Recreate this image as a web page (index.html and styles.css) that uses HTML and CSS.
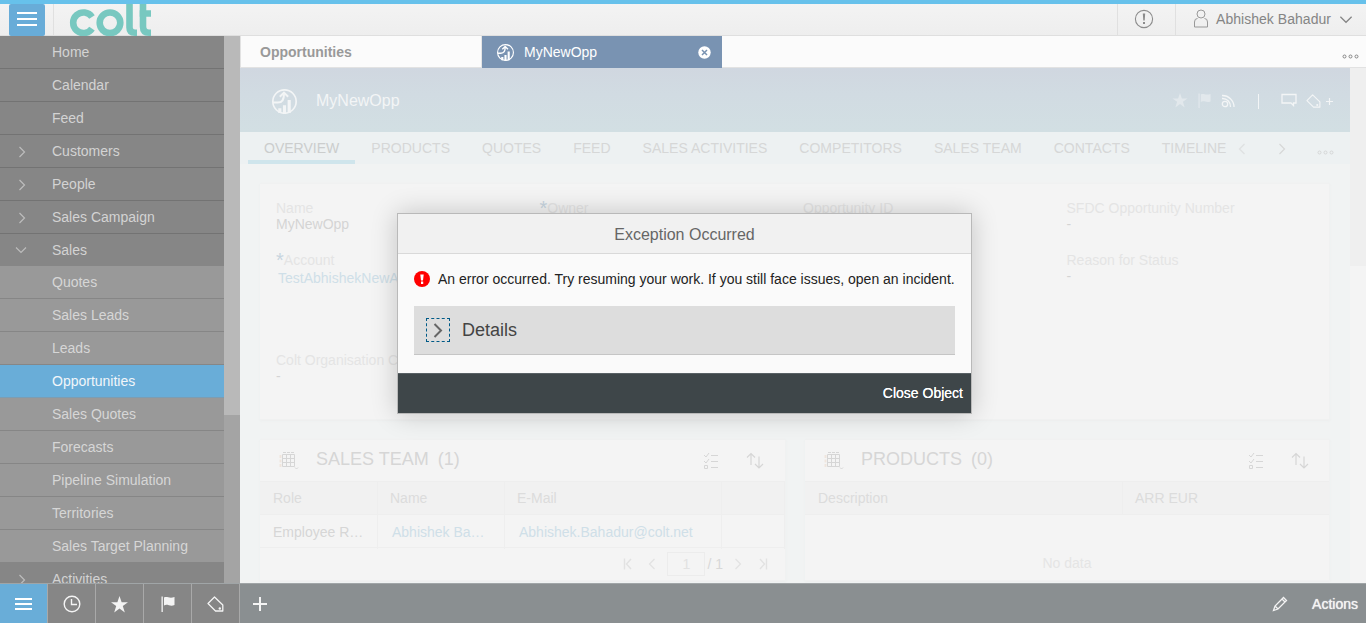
FILE: index.html
```html
<!DOCTYPE html>
<html lang="en">
<head>
<meta charset="utf-8">
<title>MyNewOpp</title>
<link rel="stylesheet" href="styles.css">
</head>
<body>
<svg class="defs" width="0" height="0">
  <symbol id="right" viewBox="0 0 8 12"><path d="M1.500 1l5 5-5 5" fill="none" stroke="currentColor" stroke-width="1.200"/></symbol>
  <symbol id="down" viewBox="0 0 12 8"><path d="M1 1.500l5 5 5-5" fill="none" stroke="currentColor" stroke-width="1.100"/></symbol>
  <symbol id="opp" viewBox="0 0 24 24"><circle cx="12" cy="12" r="11.200" fill="none" stroke="currentColor" stroke-width="1.600"/><path d="M1 13h4.500c4.500 0 6-3 6-8M7.500 7.500l4-4 4 4" fill="none" stroke="currentColor" stroke-width="1.900"/><path d="M6 18.500h3V23H6zM10.500 15.500h3V24h-3zM15 10.500h3V23h-3z" fill="currentColor"/></symbol>
  <symbol id="star" viewBox="0 0 16 16"><path d="M8 0l2 5.800h6l-4.900 3.600L13 15.500 8 11.800l-5 3.700 1.900-6.100L0 5.800h6z" fill="currentColor"/></symbol>
  <symbol id="flag" viewBox="0 0 14 16"><path d="M.5.500h1.300V16H.5zM3 1.500c3-1.800 5 1.500 10.500-.500v8C9 11 6.500 7.500 3 9.500z" fill="currentColor"/></symbol>
  <symbol id="tag" viewBox="0 0 17 16"><path d="M1 7.500L7.500 1 15.800 9v6H8.500z" fill="none" stroke="currentColor" stroke-width="1.300" stroke-linejoin="round"/><circle cx="12.800" cy="12.500" r="1.200" fill="currentColor"/></symbol>
  <symbol id="grid" viewBox="0 0 22 20"><path d="M4.500 3.500h12v12h-12zM8.500 3.500v12M12.500 3.500v12M4.500 7.500h12M4.500 11.500h12M5 1.500h3M9 1.500h3M13 1.500h3M17 16.500l1.500 1.500 1.500-1.500" fill="none" stroke="currentColor"/><path d="M2.500 4v12" stroke="#efe5dd" stroke-width="2" stroke-dasharray="3 1.500"/></symbol>
  <symbol id="list" viewBox="0 0 16 17"><path d="M8 3.500h7M8 9.500h7M8 15.500h7M1 3l2 2 3-4M1 9l2 2 3-4M1.500 13.500h3v3h-3z" fill="none" stroke="currentColor"/></symbol>
  <symbol id="sort" viewBox="0 0 18 17"><path d="M5 13V1.500M1 5.500l4-4 4 4M13 4.500V16M9 12l4 4 4-4" fill="none" stroke="currentColor" stroke-width="1.200"/></symbol>
  <symbol id="dots" viewBox="0 0 17 5"><g fill="none" stroke="currentColor"><circle cx="2.500" cy="2.500" r="1.500"/><circle cx="8.500" cy="2.500" r="1.500"/><circle cx="14.500" cy="2.500" r="1.500"/></g></symbol>
</svg>

<header class="top">
  <div class="menu-btn"><i></i><i></i><i></i></div>
  <div class="brand">
    <svg width="83" height="32" viewBox="0 0 83 32" role="img" aria-label="colt"><g fill="none" stroke="#78c8c0" stroke-width="6.600"><path d="M23 13a10.300 10.300 0 1 0 0 11.600"/><circle cx="41" cy="18.800" r="10.300"/><path d="M60.500 0v23.500q0 5.200 5.500 5.200h2M74 0v22.500q0 6.200 6 6.200h2M70.500 9.500H82"/></g></svg>
  </div>
  <div class="alert"><svg width="20" height="20" viewBox="0 0 20 20"><circle cx="10" cy="10" r="8.600" fill="none" stroke="#8c8c8c" stroke-width="1.100"/><path d="M8.800 4.500h2.400l-.5 7H9.300zM9 13h2v2H9z" fill="#8c8c8c"/></svg></div>
  <div class="user"><svg width="16" height="19" viewBox="0 0 16 19" fill="none" stroke="#999"><circle cx="8" cy="5" r="4"/><path d="M4.500 9.500Q1.500 9.500 1.500 13v5h13v-5q0-3.500-3-3.500"/></svg><span>Abhishek Bahadur</span><svg class="user-down" width="14" height="9"><use href="#down"/></svg></div>
</header>

<div class="middle">
  <nav class="side">
    <div class="row">Home</div>
    <div class="row">Calendar</div>
    <div class="row">Feed</div>
    <div class="row"><svg class="chev"><use href="#right"/></svg>Customers</div>
    <div class="row"><svg class="chev"><use href="#right"/></svg>People</div>
    <div class="row"><svg class="chev"><use href="#right"/></svg>Sales Campaign</div>
    <div class="row open"><svg class="chev-down"><use href="#down"/></svg>Sales</div>
    <div class="row sub">Quotes</div>
    <div class="row sub">Sales Leads</div>
    <div class="row sub">Leads</div>
    <div class="row sub active">Opportunities</div>
    <div class="row sub">Sales Quotes</div>
    <div class="row sub">Forecasts</div>
    <div class="row sub">Pipeline Simulation</div>
    <div class="row sub">Territories</div>
    <div class="row sub">Sales Target Planning</div>
    <div class="row"><svg class="chev"><use href="#right"/></svg>Activities</div>
  </nav>
  <div class="side-scroll"><div class="thumb"></div></div>

  <main class="work">
    <div class="doc-tabs">
      <div class="doc-tab">Opportunities</div>
      <div class="doc-tab current"><svg width="17" height="17"><use href="#opp"/></svg><span>MyNewOpp</span><svg class="close" width="13" height="13" viewBox="0 0 13 13"><circle cx="6.500" cy="6.500" r="6.200" fill="#fff"/><path d="M4 4l5 5M9 4l-5 5" stroke="#7993b2" stroke-width="1.500"/></svg></div>
      <svg class="more" width="17" height="5"><use href="#dots"/></svg>
    </div>
    <div class="pane">
      <div class="page">
        <div class="title-bar">
          <svg width="25" height="25"><use href="#opp"/></svg>
          <h1>MyNewOpp</h1>
          <div class="tools">
            <svg class="t-star" width="16" height="15"><use href="#star"/></svg>
            <svg class="t-flag" width="13" height="15"><use href="#flag"/></svg>
            <svg class="t-feed" width="14" height="14" viewBox="0 0 14 14" fill="none" stroke="currentColor" stroke-width="1.300"><circle cx="4" cy="10" r="2.700"/><path d="M1 4.500a8 8 0 0 1 8.500 8.500M1 1.500A11.500 11.500 0 0 1 13 13"/></svg>
            <i class="bar"></i>
            <svg class="t-chat" width="16" height="14" viewBox="0 0 16 14"><path d="M1 1.500h14V10h-2.500v2.500L10 10H1z" fill="none" stroke="currentColor" stroke-width="1.300"/></svg>
            <svg class="t-tag" width="15" height="14"><use href="#tag"/></svg>
            <svg class="t-plus" width="9" height="9" viewBox="0 0 9 9"><path d="M4.500 1v7M1 4.500h7" stroke="currentColor" stroke-width="1.200"/></svg>
          </div>
        </div>
        <div class="facets">
          <span class="sel">OVERVIEW</span><span>PRODUCTS</span><span>QUOTES</span><span>FEED</span><span>SALES ACTIVITIES</span><span>COMPETITORS</span><span>SALES TEAM</span><span>CONTACTS</span><span>TIMELINE</span>
          <svg class="f-left" width="8" height="12"><use href="#right"/></svg><svg class="f-right" width="8" height="12"><use href="#right"/></svg><svg class="f-more" width="17" height="5"><use href="#dots"/></svg>
        </div>
        <div class="body">
          <section class="card form">
            <div class="field"><label>Name</label><p>MyNewOpp</p></div>
            <div class="field"><label><b>*</b>Owner</label></div>
            <div class="field"><label>Opportunity ID</label></div>
            <div class="field"><label>SFDC Opportunity Number</label><p>-</p></div>
            <div class="field"><label><b>*</b>Account</label><p class="link">TestAbhishekNewAccount</p></div>
            <div class="field"></div>
            <div class="field"></div>
            <div class="field"><label>Reason for Status</label><p>-</p></div>
            <div class="field"><label>Colt Organisation Code</label><p>-</p></div>
          </section>
          <div class="lists">
            <section class="card list team">
              <div class="list-head"><svg class="g" width="22" height="20"><use href="#grid"/></svg><h2>SALES TEAM <span>(1)</span></h2><svg class="l" width="16" height="17"><use href="#list"/></svg><svg width="18" height="17"><use href="#sort"/></svg></div>
              <div class="tr th"><span>Role</span><span>Name</span><span>E-Mail</span><span></span></div>
              <div class="tr"><span>Employee R…</span><span class="link">Abhishek Ba…</span><span class="link">Abhishek.Bahadur@colt.net</span><span></span></div>
              <div class="pager">
                <svg width="10" height="12" viewBox="0 0 10 12"><path d="M1.500 .5v11M8 1L3.500 6 8 11" fill="none" stroke="currentColor" stroke-width="1.400"/></svg>
                <svg class="flip p-prev" width="8" height="12"><use href="#right"/></svg>
                <span class="num">1</span><span class="of">/ 1</span>
                <svg class="p-next" width="8" height="12"><use href="#right"/></svg>
                <svg class="flip" width="10" height="12" viewBox="0 0 10 12"><path d="M1.500 .5v11M8 1L3.500 6 8 11" fill="none" stroke="currentColor" stroke-width="1.400"/></svg>
              </div>
            </section>
            <section class="card list products">
              <div class="list-head"><svg class="g" width="22" height="20"><use href="#grid"/></svg><h2>PRODUCTS <span>(0)</span></h2><svg class="l" width="16" height="17"><use href="#list"/></svg><svg width="18" height="17"><use href="#sort"/></svg></div>
              <div class="tr th"><span>Description</span><span>ARR EUR</span></div>
              <div class="empty">No data</div>
            </section>
          </div>
        </div>
      </div>
      <div class="page-scroll"><div class="thumb"></div></div>
    </div>
  </main>
</div>

<footer class="foot">
  <div class="cell on"><svg width="17" height="14" viewBox="0 0 17 14"><path d="M0 2h17M0 7h17M0 12h17" stroke="currentColor" stroke-width="2"/></svg></div>
  <div class="cell"><svg width="18" height="18" viewBox="0 0 18 18" fill="none" stroke="currentColor" stroke-width="1.400"><circle cx="9" cy="9" r="7.800"/><path d="M8.500 4v5.500H14"/></svg></div>
  <div class="cell"><svg width="17" height="17"><use href="#star"/></svg></div>
  <div class="cell"><svg width="14" height="16"><use href="#flag"/></svg></div>
  <div class="cell"><svg width="17" height="16"><use href="#tag"/></svg></div>
  <svg class="add" width="16" height="16" viewBox="0 0 16 16"><path d="M8 1v14M1 8h14" stroke="currentColor" stroke-width="2"/></svg>
  <svg class="pen" width="16" height="16" viewBox="0 0 16 16"><path d="M1.500 14.500l1.500-4.500 8.500-8.500 3 3L6 13zM3 10l3 3M10 3l3 3" fill="none" stroke="currentColor" stroke-width="1.300"/></svg>
  <span>Actions</span>
</footer>

<div class="dialog" role="dialog">
  <div class="dialog-title">Exception Occurred</div>
  <div class="dialog-body">
    <div class="message"><svg width="16" height="16" viewBox="0 0 16 16"><circle cx="8" cy="8" r="8" fill="#f00"/><path d="M6.300 3.500h3.400l-.7 6H7zM7 10.500h2.200v2.500H7z" fill="#fff"/></svg><span>An error occurred. Try resuming your work. If you still face issues, open an incident.</span></div>
    <div class="details"><span class="expander"><svg width="10" height="15" viewBox="0 0 10 15"><path d="M1.500 1l6.500 6.500L1.500 14" fill="none" stroke="#666" stroke-width="2"/></svg></span>Details</div>
  </div>
  <div class="dialog-foot">Close Object</div>
</div>
</body>
</html>
```
FILE: styles.css
```css
* { box-sizing: border-box; }
body { margin: 0; width: 1366px; height: 623px; overflow: hidden; display: flex; flex-direction: column; font: 14px/16px "Liberation Sans", Arial, sans-serif; position: relative; background: #f3f3f3; }
svg { flex: none; display: block; }
.defs { position: absolute; }
h1, h2, p { margin: 0; font-weight: normal; }

.top { height: 36px; flex: none; border-top: 4px solid #67c1eb; border-bottom: 1px solid #dfdfdf; background: linear-gradient(#f3f3f3, #eee); display: flex; }
.menu-btn { width: 36px; height: 32px; margin-left: 9px; background: #68acd8; border-radius: 2px; display: flex; flex-direction: column; gap: 4px; padding: 8px 8px 0; }
.menu-btn i { height: 2px; background: #fff; }
.brand { margin-left: 8px; border-left: 1px solid #e0e0e0; padding-left: 15px; overflow: hidden; flex: 1; height: 32px; }
.alert { width: 58px; border-left: 1px solid #e0e0e0; padding: 5px 0 0 16px; }
.user { width: 191px; border-left: 1px solid #e0e0e0; display: flex; padding: 5px 0 0 17px; color: #858585; }
.user span { margin-left: 7px; line-height: 20px; width: 115px; white-space: nowrap; letter-spacing: .04px; }
.user-down { margin: 6px 0 0 8px; }

.middle { display: flex; height: 547px; flex: none; }
.side { width: 224px; overflow: hidden; }
.row { height: 33px; line-height: 32px; padding-left: 52px; background: #868686; border-bottom: 1px solid #737373; color: #d3d3d3; position: relative; }
.row.open { height: 32px; border: 0; }
.row.sub { background: #999; border-color: #868686; color: #d6d6d6; }
.row.active { background: #69add8; border-color: #7c9db3; color: #f1f6fa; }
.row:last-child { border-bottom: 0; }
.chev { position: absolute; left: 18px; top: 11px; width: 8px; height: 12px; color: #bdbdbd; }
.chev-down { position: absolute; left: 15px; top: 12px; width: 12px; height: 8px; color: #bdbdbd; }
.side-scroll { width: 16px; background: #a4a4a4; }
.side-scroll .thumb { height: 379px; background: #b9b9b9; }

.work { flex: 1; display: flex; flex-direction: column; }
.doc-tabs { height: 32px; display: flex; background: #fbfbfb; border-bottom: 1px solid #e2e2e2; border-left: 1px solid #e2e2e2; }
.doc-tab { width: 241px; padding-left: 19px; line-height: 32px; font-weight: bold; color: #999; border-right: 1px solid #e5e5e5; }
.doc-tab.current { width: 240px; height: 32px; background: #7993b2; color: #fff; font-weight: normal; display: flex; align-items: center; padding: 0 11px 0 15px; border: 0; }
.doc-tab.current span { margin-left: 10px; }
.close { margin-left: auto; }
.more { color: #858585; margin: 18px 7px 0 auto; }
.pane { flex: 1; display: flex; min-height: 0; }
.page { width: 1110px; overflow: hidden; background: #f1f3f3; }
.title-bar { height: 64px; background: linear-gradient(#d0d7e0, #d1dbe2 40%, #d2dfe3); display: flex; align-items: center; padding: 2px 16px 0 32px; color: #f3f5f6; }
.title-bar h1 { font-size: 16px; margin-left: 19px; }
.tools { margin-left: auto; display: flex; align-items: center; }
.t-star, .t-flag { color: #e2e8ec; margin-top: -2px; }
.t-flag { margin-left: 10px; }
.t-feed { margin-left: 10px; }
.bar { width: 1px; height: 15px; background: currentColor; margin-left: 23px; }
.t-chat { margin-left: 22px; margin-top: -2px; }
.t-tag { margin-left: 9px; }
.t-plus { margin-left: 4px; margin-top: 1px; }
.facets { height: 32px; background: #edf1f2; display: flex; padding-left: 8px; color: #d6d7d7; line-height: 32px; }
.facets span { padding: 0 16px; white-space: nowrap; letter-spacing: .014px; }
.facets .sel { border-bottom: 4px solid #cfe5ec; color: #cbcdcd; }
.f-left { margin: 11px 0 0 -4px; transform: scaleX(-1); opacity: .6; }
.f-right { margin: 11px 0 0 32px; }
.f-more { margin: 18px 16px 0 auto; }

.body { padding: 19px 20px 0; }
.card { background: #f4f4f4; border: 1px solid #f0f1f1; border-left: 0; box-shadow: 0 1px 2px #eceeee; }
.form { height: 237px; padding: 16px 0 0 16px; display: grid; grid-template-columns: repeat(4, 263.500px); grid-template-rows: 52px 100px auto; }
.field label { display: block; color: #e4e4e4; white-space: nowrap; }
.field label b { font-size: 20px; line-height: 0; vertical-align: -2px; color: #c8d5df; font-weight: normal; }
.field p { color: #d4d4d4; }
.field .link { padding: 2px 0 0 2px; }
.lists { display: flex; gap: 19px; margin-top: 19px; }
.list { width: 526px; height: 142px; }
.list-head { height: 41px; display: flex; align-items: center; padding: 0 21px 0 18px; color: #d6d6d6; }
.list-head h2 { font-size: 18px; line-height: 20px; margin: -3px auto 0 16px; }
.list-head h2 span { margin-left: 4px; }
.list-head .l { margin-right: 27px; }
.list-head svg { margin-top: 0; }
.tr { display: grid; grid-template-columns: 118px 127px 217px auto; height: 33px; line-height: 34px; border-bottom: 1px solid #eee; color: #d6d6d6; }
.tr span { padding-left: 13px; border-right: 1px solid #eee; white-space: nowrap; }
.tr .link { padding-left: 14px; }
.th { height: 34px; line-height: 33px; background: #f1f1f1; border-top: 1px solid #eee; color: #dcdcdc; }
.th span + span { padding-left: 12px; }
.tr .link, .field .link { color: #cfdfe8; }
.pager { height: 32px; display: flex; align-items: center; justify-content: flex-end; padding-right: 17px; color: #e2e2e2; }
.flip { transform: scaleX(-1); }
.num { width: 38px; height: 24px; line-height: 23px; border: 1px solid #ececec; text-align: center; margin-left: 11px; }
.of { margin: 0 11px 0 2px; color: #d8d8d8; }
.p-prev { margin-left: 15px; }
.p-next { margin-right: 16px; }
.products { width: 525px; }
.products .list-head { padding-right: 20px; }
.products .tr { grid-template-columns: 318px auto; }
.products .th span:last-child { border-right: 0; }
.empty { height: 66px; padding-top: 40px; text-align: center; color: #e5e5e5; }
.page-scroll { width: 16px; background: #f4f4f4; }
.page-scroll .thumb { height: 198px; background: #efefef; }

.foot { height: 40px; flex: none; background: #8a8f91; border-top: 1px solid #a0a5a7; display: flex; align-items: center; color: #f4f4f4; padding-right: 8px; line-height: 40px; }
.cell { width: 48px; height: 40px; background: #868686; border-right: 1px solid #a9a9a9; display: flex; align-items: center; justify-content: center; padding-top: 1px; }
.cell.on { background: #69add8; color: #fff; }
.add { margin: 1px auto 0 12px; }
.pen { margin-right: 24px; }
.foot span { text-shadow: 0 0 1px #fff; }

.dialog { position: absolute; left: 397px; top: 213px; width: 575px; height: 201px; border: 1px solid #b9b9b9; background: #fafafa; box-shadow: 0 0 25px rgba(0,0,0,.2); display: flex; flex-direction: column; }
.dialog-title { height: 40px; line-height: 41px; background: #f1f1f1; border-bottom: 1px solid #d9d9d9; text-align: center; font-size: 16px; color: #666; }
.dialog-body { flex: 1; padding: 17px 16px 0; }
.message { display: flex; color: #222; white-space: nowrap; }
.message span { margin-left: 8px; }
.details { margin-top: 19px; height: 49px; background: #ddd; border-bottom: 1px solid #c5c5c5; display: flex; align-items: center; padding-left: 12px; font-size: 18px; color: #444; }
.expander { width: 24px; height: 24px; border: 1px dashed #005a87; margin-right: 12px; display: flex; align-items: center; justify-content: center; }
.dialog-foot { height: 40px; line-height: 39px; background: #3e4649; border-top: 1px solid #596165; color: #fff; text-align: right; padding-right: 8px; text-shadow: 0 0 .5px #fff; }
```
